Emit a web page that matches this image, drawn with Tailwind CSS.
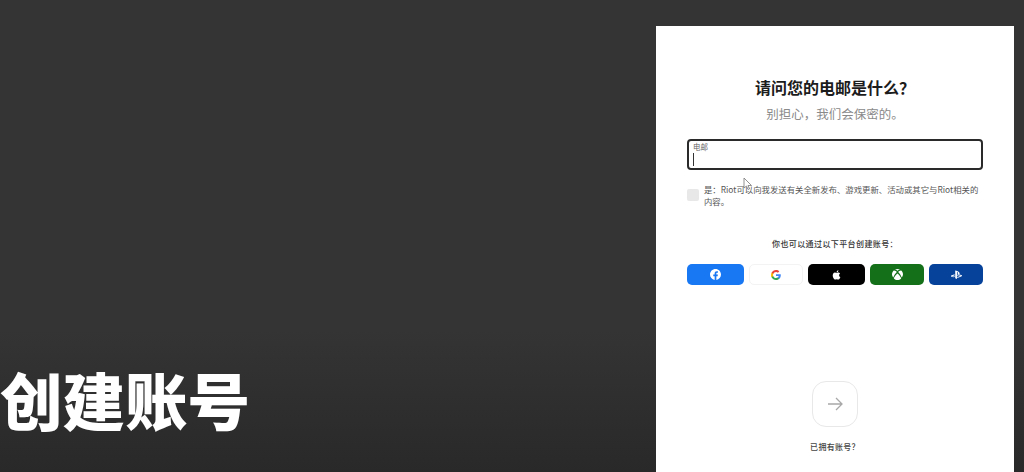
<!DOCTYPE html>
<html lang="zh-CN">
<head>
    <meta charset="UTF-8">
    <meta name="viewport" content="width=device-width, initial-scale=1.0">
    <title>创建账号</title>
    <script src="https://cdn.jsdelivr.net/npm/@tailwindcss/browser@4"></script>
</head>
<body class="relative w-[1024px] h-[472px] overflow-hidden bg-gradient-to-b from-[#343434] from-70% to-[#292929] font-['Noto_Sans_CJK_SC','Noto_Sans',sans-serif]">
    <div class="flex justify-between items-stretch h-full">
        <!-- Left title -->
        <div class="flex flex-col justify-end pb-[35px]">
            <h1 class="text-[62.5px] leading-[76px] font-black text-white whitespace-nowrap">创建账号</h1>
        </div>

        <!-- Sign up panel -->
        <div class="w-[358px] mt-[26px] mr-[10px] bg-white flex flex-col items-center px-[31px] pt-[50px]">
            <h2 class="text-[16px] leading-[22px] font-bold text-[#1c1c1c]">请问您的电邮是什么？</h2>
            <p class="mt-[6px] text-[12.5px] leading-[20px] text-[#8a8a8a]">别担心，我们会保密的。</p>

            <div class="mt-[15px] w-full h-[31px] border-2 border-[#2a2a2a] rounded-[4px] px-[4px] pt-[1px] flex flex-col">
                <span class="text-[7.5px] leading-[9px] text-[#666]">电邮</span>
                <span class="w-px h-[13px] bg-[#333] mt-[2px]"></span>
            </div>

            <div class="mt-[13px] w-full flex items-center gap-[5px]">
                <span class="w-[12px] h-[12px] rounded-[2px] bg-[#e8e8e8] shrink-0"></span>
                <p class="text-[8.4px] leading-[12px] text-[#555]">是：Riot可以向我发送有关全新发布、游戏更新、活动或其它与Riot相关的内容。</p>
            </div>

            <p class="mt-[31px] text-[8px] leading-[12px] font-medium tracking-[0.4px] text-[#333]">你也可以通过以下平台创建账号：</p>

            <div class="mt-[14px] w-full flex justify-between">
                <div class="w-[57px] h-[21px] rounded-[5px] bg-[#1877f2] flex items-center justify-center">
                    <svg class="w-[11px] h-[11px]" viewBox="0 0 24 24"><path fill="#fff" d="M24 12.07C24 5.4 18.63 0 12 0S0 5.4 0 12.07c0 6.03 4.39 11.02 10.13 11.93v-8.44H7.08v-3.49h3.05V9.41c0-3.02 1.79-4.69 4.53-4.69 1.31 0 2.69.24 2.69.24v2.97h-1.51c-1.49 0-1.96.93-1.96 1.89v2.25h3.33l-.53 3.49h-2.8V24C19.61 23.09 24 18.1 24 12.07z"/></svg>
                </div>
                <div class="w-[54px] h-[21px] rounded-[5px] bg-white border border-[#f3f3f3] flex items-center justify-center">
                    <svg class="w-[10px] h-[10px]" viewBox="0 0 24 24">
                        <path fill="#4285F4" d="M23.5 12.3c0-.9-.1-1.6-.2-2.3H12v4.5h6.5c-.3 1.5-1.1 2.7-2.4 3.6v3h3.9c2.2-2.1 3.5-5.1 3.5-8.8z"/>
                        <path fill="#34A853" d="M12 24c3.2 0 6-1.1 8-2.9l-3.9-3c-1.1.7-2.5 1.2-4.1 1.2-3.1 0-5.8-2.1-6.7-5H1.3v3.1C3.3 21.3 7.3 24 12 24z"/>
                        <path fill="#FBBC05" d="M5.3 14.3c-.5-1.5-.5-3.1 0-4.6V6.6h-4c-1.7 3.4-1.7 7.4 0 10.8l4-3.1z"/>
                        <path fill="#EA4335" d="M12 4.8c1.8 0 3.3.6 4.6 1.8l3.4-3.4C17.9 1.2 15.2 0 12 0 7.3 0 3.3 2.7 1.3 6.6l4 3.1c.9-2.8 3.6-4.9 6.7-4.9z"/>
                    </svg>
                </div>
                <div class="w-[57px] h-[21px] rounded-[5px] bg-black flex items-center justify-center">
                    <svg class="w-[10px] h-[10px]" viewBox="0 0 24 24"><path fill="#fff" d="M17.05 12.54c-.03-2.85 2.33-4.22 2.43-4.29-1.32-1.94-3.38-2.2-4.12-2.23-1.75-.18-3.42 1.03-4.31 1.03-.89 0-2.26-1-3.72-.98-1.91.03-3.68 1.11-4.66 2.82-1.99 3.45-.51 8.55 1.43 11.35.95 1.37 2.07 2.91 3.55 2.85 1.43-.06 1.97-.92 3.69-.92 1.72 0 2.21.92 3.72.89 1.54-.03 2.51-1.39 3.45-2.77 1.09-1.59 1.53-3.13 1.56-3.21-.03-.01-2.99-1.15-3.02-4.54zM14.2 4.18c.79-.95 1.32-2.28 1.17-3.6-1.13.05-2.51.75-3.32 1.71-.73.84-1.37 2.2-1.2 3.49 1.26.1 2.56-.64 3.35-1.6z"/></svg>
                </div>
                <div class="w-[54px] h-[21px] rounded-[5px] bg-[#15701a] flex items-center justify-center">
                    <svg class="w-[11px] h-[11px]" viewBox="0 0 24 24"><path fill="#fff" d="M12 0c2.2 0 4.2.6 5.9 1.6.2.1.2.3.1.3-2.2-.5-4.6.9-6 2-1.4-1.1-3.8-2.5-6-2-.1 0-.1-.2.1-.3C7.8.6 9.8 0 12 0zM3.9 3.5c2.6-.6 5.6 2.2 6.6 3.2-3 3-6.6 7.600-7.300 11.500-.100.300-.300.300-.400.100C1 16.300 0 14.300 0 12 0 8.500 1.500 5.400 3.900 3.500zm16.200 0C22.500 5.400 24 8.500 24 12c0 2.300-1 4.300-2.800 6.300-.1.200-.3.200-.4-.100-.7-3.900-4.300-8.500-7.300-11.500 1-1 4-3.800 6.600-3.200zM12 9.800c3.300 2.800 6.800 7.200 7.900 10.300.1.200 0 .4-.1.500C17.700 22.700 15 24 12 24s-5.700-1.300-7.800-3.400c-.1-.1-.2-.3-.1-.5C5.200 17 8.700 12.600 12 9.800z"/></svg>
                </div>
                <div class="w-[54px] h-[21px] rounded-[5px] bg-[#06429a] flex items-center justify-center">
                    <svg class="w-[11px] h-[11px]" viewBox="0 0 24 24"><path fill="#fff" d="M9.200 3.500v16.900l3.800 1.200V7.400c0-.7.300-1.100.800-1 .6.200.8.700.8 1.400v5.700c2.400 1.100 4.200 0 4.200-3.100 0-3.200-1.100-4.600-4.300-5.700-1.300-.4-3.600-1.100-5.300-1.200zM13.800 17.200l6.200-2.200c.7-.3.800-.6.200-.8-.5-.2-1.500-.100-2.200.100l-4.200 1.500v-2.400l.2-.100s1.200-.4 2.900-.6c1.700-.2 3.800 0 5.400.6 1.800.6 2 1.400 1.600 2-.5.600-1.500 1-1.500 1l-8.600 3.100zM1.100 17c-1.900-.5-2.200-1.600-1.300-2.300.8-.6 2.200-1 2.200-1l5.800-2.100v2.400l-4.200 1.500c-.7.300-.8.600-.2.800.6.200 1.600.100 2.300-.100l2.100-.8v2.200c-.1 0-.3.100-.4.100-2.100.3-4.300.2-6.300-.700z"/></svg>
                </div>
            </div>

            <!-- Submit arrow -->
            <div class="mt-auto flex flex-col items-center pb-[19px]">
                <div class="w-[46px] h-[46px] rounded-[14px] border border-[#e8e8e8] flex items-center justify-center">
                    <svg class="w-[16px] h-[16px]" viewBox="0 0 16 16" fill="none" stroke="#a8a8a8" stroke-width="1.3"><path d="M1 8h14M9 2l6 6-6 6"/></svg>
                </div>
                <p class="mt-[14px] text-[8px] leading-[12px] font-medium tracking-[0.3px] text-[#444]">已拥有账号？</p>
            </div>
        </div>
    </div>

    <!-- Mouse pointer over the form -->
    <svg class="absolute left-[743px] top-[177px] w-[10px] h-[14px]" viewBox="0 0 10 14" fill="#fff" stroke="#777" stroke-width="0.8"><path d="M1 1v10l2.500-2 1.500 3.500 1.500-.7L5 8.500h3.500z"/></svg>
</body>
</html>
